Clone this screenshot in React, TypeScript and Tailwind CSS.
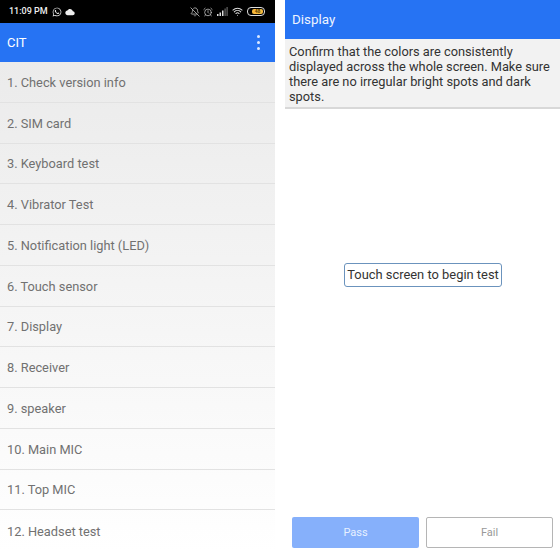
import { AlarmClock, BellOff, Wifi } from "lucide-react";
import { FaWhatsapp } from "react-icons/fa";
import { IoMdCloud } from "react-icons/io";

const items = [
  "1. Check version info",
  "2. SIM card",
  "3. Keyboard test",
  "4. Vibrator Test",
  "5. Notification light (LED)",
  "6. Touch sensor",
  "7. Display",
  "8. Receiver",
  "9. speaker",
  "10. Main MIC",
  "11. Top MIC",
  "12. Headset test",
];

function Signal() {
  return (
    <svg width="11" height="9" viewBox="0 0 11 9" className="ml-[4px]">
      <rect x="0" y="7" width="1.5" height="2" fill="#ddd" />
      <rect x="2.5" y="5.5" width="1.5" height="3.5" fill="#ddd" />
      <rect x="5" y="3.5" width="1.5" height="5.5" fill="#ddd" />
      <rect x="7.5" y="1.5" width="1.2" height="7.5" fill="#666" />
      <rect x="9.5" y="0" width="1.2" height="9" fill="#666" />
    </svg>
  );
}

function Battery() {
  return (
    <div className="ml-[4px] flex h-[9px] w-[18px] shrink-0 items-center rounded-[4px] border border-[#ddd] p-px">
      <div className="ml-[3px] flex h-full w-[11px] items-center justify-center rounded-[2px] bg-[#f5b83d] text-[5px] font-bold leading-none text-[#5a3d00]">
        48
      </div>
    </div>
  );
}

export default function App() {
  return (
    <div className="flex h-[550px] w-[560px] overflow-hidden bg-white font-['Roboto',sans-serif]">
      <div className="flex h-[550px] w-[275px] flex-col overflow-hidden">
        <div className="flex h-[23px] shrink-0 items-center justify-between bg-black pl-[9px] pr-[10px]">
          <div className="flex items-center">
            <span className="text-[9px] font-medium text-[#eee]">11:09 PM</span>
            <FaWhatsapp className="ml-[4px] text-[10px] text-[#e8e8e8]" />
            <IoMdCloud className="ml-[3px] text-[10px] text-[#eee]" />
          </div>
          <div className="flex items-center">
            <BellOff size={10} strokeWidth={1.8} className="text-[#ccc]" />
            <AlarmClock size={10} strokeWidth={1.8} className="ml-[3px] text-[#ccc]" />
            <Signal />
            <Wifi size={11} strokeWidth={2.2} className="ml-[4px] text-[#ddd]" />
            <Battery />
          </div>
        </div>
        <div className="flex h-[39px] shrink-0 items-center justify-between bg-[#2673f3] pl-[7px] pr-[15px]">
          <span className="pt-[1px] text-[13px] text-white">CIT</span>
          <div className="flex flex-col gap-[3px]">
            <span className="h-[3px] w-[3px] rounded-full bg-[#dbe8ff]" />
            <span className="h-[3px] w-[3px] rounded-full bg-[#dbe8ff]" />
            <span className="h-[3px] w-[3px] rounded-full bg-[#dbe8ff]" />
          </div>
        </div>
        <div className="flex flex-1 flex-col bg-gradient-to-b from-[#ebebeb] to-white">
          {items.map((t, i) => (
            <div
              key={t}
              className={`flex h-[40.75px] shrink-0 items-center pl-[7px] pt-[1px] text-[12.8px] text-[#717171] ${
                i < items.length - 1 ? "border-b border-[#e2e2e2]" : ""
              }`}
            >
              {t}
            </div>
          ))}
        </div>
      </div>
      <div className="ml-[10px] flex h-[550px] w-[275px] flex-col">
        <div className="flex h-[39px] shrink-0 items-center bg-[#2673f3] pl-[7px] pt-[1px] text-[13.4px] text-[#eef4ff]">
          Display
        </div>
        <div className="h-[70px] shrink-0 border-b-2 border-[#d8d8d8] bg-[#f2f2f2] px-[4px] pt-[5px] text-[12.8px] leading-[15px] text-[#333]">
          Confirm that the colors are consistently displayed across the whole screen. Make sure there are no irregular bright spots and dark spots.
        </div>
        <div className="flex flex-1 items-center justify-center pb-[76px] pl-[1px]">
          <div className="flex h-[24px] w-[158px] items-center justify-center whitespace-nowrap rounded-[3px] border border-[#6b93bd] text-[12.9px] text-[#333]">
            Touch screen to begin test
          </div>
        </div>
        <div className="flex shrink-0 gap-[7px] pb-[2px] pl-[7px]">
          <div className="flex h-[31px] w-[127px] items-center justify-center rounded-[2px] bg-[#86b0fb] pt-[2px] text-[11px] text-[#e8f0ff]">
            Pass
          </div>
          <div className="flex h-[31px] w-[127px] items-center justify-center rounded-[2px] border border-[#b5b5b5] pt-[2px] text-[11px] text-[#999]">
            Fail
          </div>
        </div>
      </div>
    </div>
  );
}
